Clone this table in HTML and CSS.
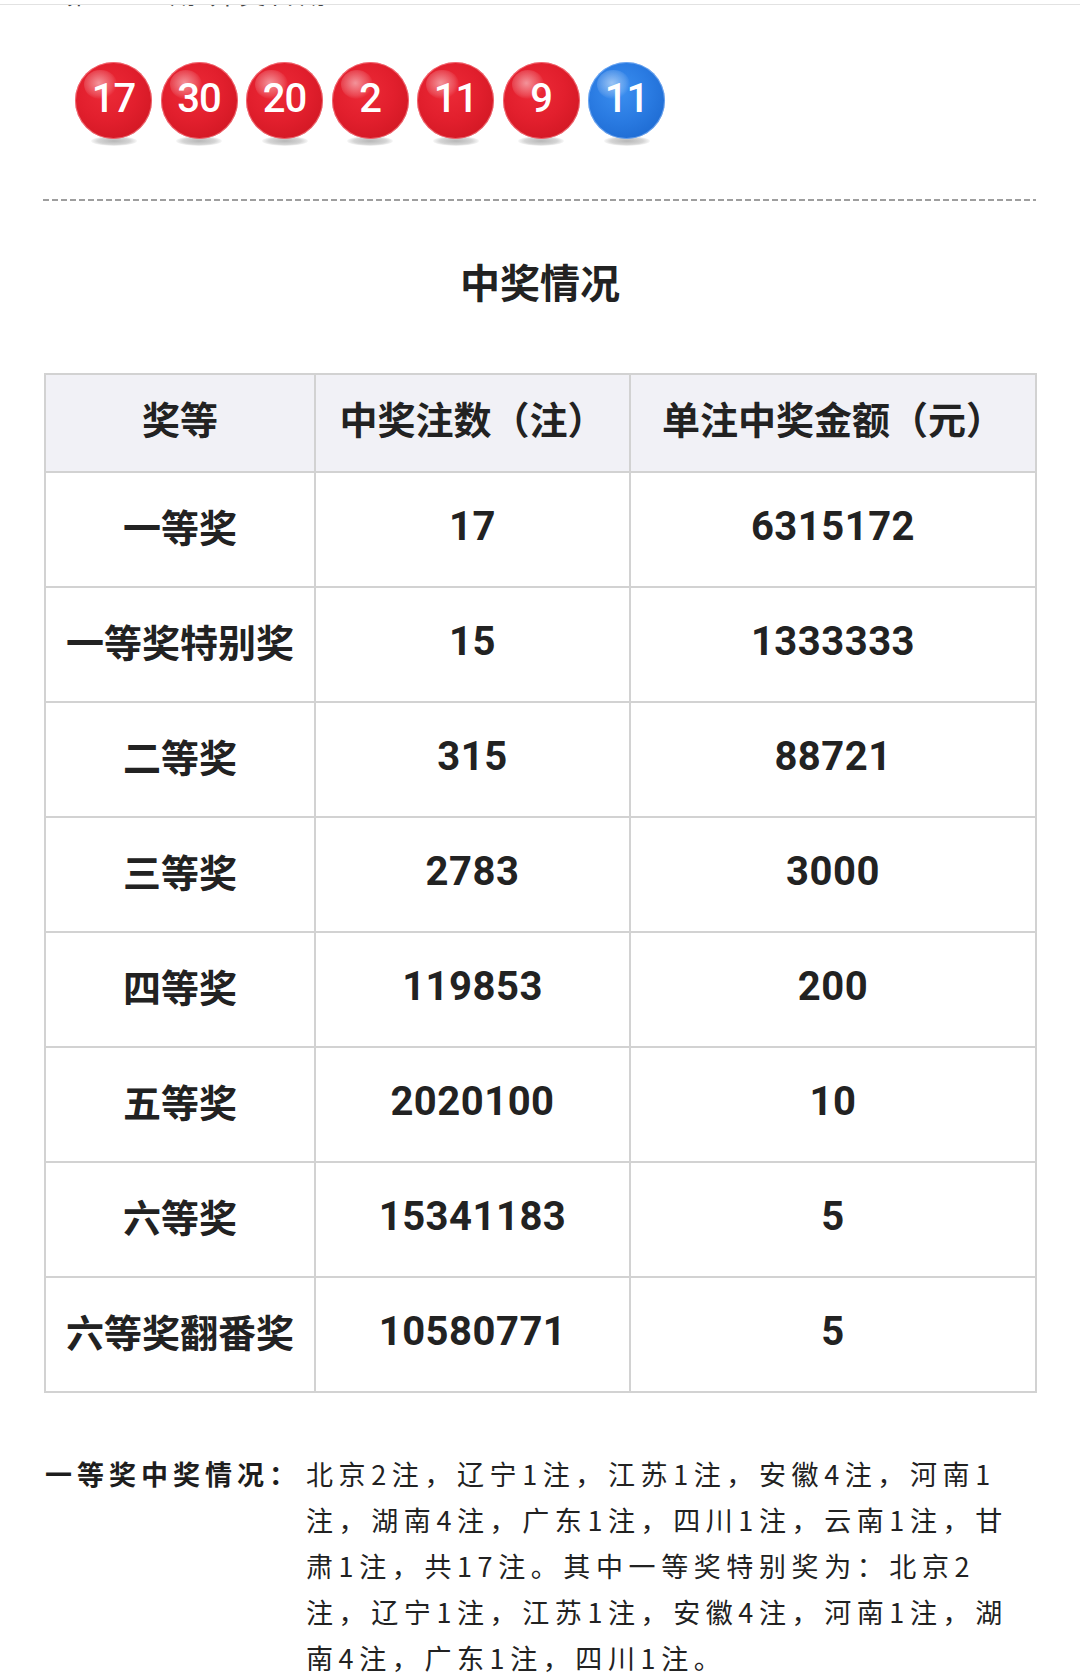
FILE: index.html
```html
<!DOCTYPE html>
<html lang="zh-CN">
<head>
<meta charset="utf-8">
<title>中奖情况</title>
<link rel="stylesheet" href="styles.css">
</head>
<body>
<div class="topbar"></div>
<div class="cut"><div class="cut-text">第2021期 开奖日期</div></div>

<div class="balls">
  <span class="ball red">17</span>
  <span class="ball red">30</span>
  <span class="ball red">20</span>
  <span class="ball red">2</span>
  <span class="ball red">11</span>
  <span class="ball red">9</span>
  <span class="ball blue">11</span>
</div>

<div class="dashed"></div>

<h2 class="title">中奖情况</h2>

<div class="prize-table">
  <div class="cell head">奖等</div>
  <div class="cell head">中奖注数（注）</div>
  <div class="cell head">单注中奖金额（元）</div>

  <div class="cell label">一等奖</div>
  <div class="cell num">17</div>
  <div class="cell num">6315172</div>

  <div class="cell label">一等奖特别奖</div>
  <div class="cell num">15</div>
  <div class="cell num">1333333</div>

  <div class="cell label">二等奖</div>
  <div class="cell num">315</div>
  <div class="cell num">88721</div>

  <div class="cell label">三等奖</div>
  <div class="cell num">2783</div>
  <div class="cell num">3000</div>

  <div class="cell label">四等奖</div>
  <div class="cell num">119853</div>
  <div class="cell num">200</div>

  <div class="cell label">五等奖</div>
  <div class="cell num">2020100</div>
  <div class="cell num">10</div>

  <div class="cell label">六等奖</div>
  <div class="cell num">15341183</div>
  <div class="cell num">5</div>

  <div class="cell label">六等奖翻番奖</div>
  <div class="cell num">10580771</div>
  <div class="cell num">5</div>
</div>

<div class="detail">
  <div class="detail-label">一等奖中奖情况：</div>
  <div class="detail-body">北京2注，辽宁1注，江苏1注，安徽4注，河南1<br>注，湖南4注，广东1注，四川1注，云南1注，甘<br>肃1注，共17注。其中一等奖特别奖为：北京2<br>注，辽宁1注，江苏1注，安徽4注，河南1注，湖<br>南4注，广东1注，四川1注。</div>
</div>
</body>
</html>
```

FILE: styles.css
```css
html {
  margin: 0;
  padding: 0;
  background: #ffffff;
}

body {
  margin: 0;
  padding: 0;
  width: 1080px;
  font-family: "Noto Sans CJK SC", "Noto Sans", sans-serif;
  color: #222222;
  overflow: hidden;
}

.topbar {
  height: 4px;
  border-bottom: 1px solid #e2e2e2;
}

.cut {
  height: 3px;
  overflow: hidden;
  padding-left: 66px;
}

.cut-text {
  font-size: 26px;
  line-height: 30px;
  margin-top: -27px;
  color: #444;
  letter-spacing: 4px;
}

.balls {
  display: flex;
  gap: 8.5px;
  padding: 54px 0 0 75px;
  height: 77px;
}

.ball {
  position: relative;
  width: 77px;
  height: 77px;
  border-radius: 50%;
  display: flex;
  align-items: center;
  justify-content: center;
  font-family: Roboto, "Liberation Sans", sans-serif;
  font-size: 40px;
  font-weight: 500;
  color: #ffffff;
  padding-bottom: 5px;
  box-sizing: border-box;
  letter-spacing: -1px;
}

.ball.red {
  background: radial-gradient(circle at 42% 38%, #ec2a37 0%, #e21f2d 45%, #c9141f 100%);
  box-shadow: inset 0 0 0 1px rgba(255, 160, 165, 0.55);
}

.ball.blue {
  background: radial-gradient(circle at 42% 38%, #3b8ff0 0%, #2a7be2 45%, #1762c9 100%);
  box-shadow: inset 0 0 0 1px rgba(160, 200, 255, 0.55);
}

.ball::before {
  content: "";
  position: absolute;
  left: 12%;
  top: 10%;
  width: 42%;
  height: 38%;
  border-radius: 50%;
  background: radial-gradient(ellipse at 45% 45%, rgba(255, 255, 255, 0.5) 0%, rgba(255, 255, 255, 0.15) 55%, rgba(255, 255, 255, 0) 72%);
}

.ball::after {
  content: "";
  position: absolute;
  left: 50%;
  bottom: -7px;
  width: 46px;
  height: 10px;
  margin-left: -23px;
  border-radius: 50%;
  background: radial-gradient(ellipse at center, rgba(175, 175, 175, 0.9) 0%, rgba(195, 195, 195, 0.7) 50%, rgba(220, 220, 220, 0) 75%);
  z-index: -1;
}

.dashed {
  height: 2px;
  margin: 60px 44px 0 43px;
  background: repeating-linear-gradient(to right, #9e9e9e 0, #9e9e9e 6px, transparent 6px, transparent 9px);
}

.title {
  margin: 60px 0 0;
  font-size: 40px;
  line-height: 40px;
  font-weight: 700;
  text-align: center;
  color: #222;
}

.prize-table {
  display: grid;
  grid-template-columns: 270px 315px 406px;
  grid-template-rows: 98px repeat(8, 115px);
  width: 993px;
  margin: 72px 0 0 44px;
  border-top: 2px solid #d2d2d2;
  border-left: 2px solid #d2d2d2;
  box-sizing: border-box;
}

.cell {
  display: flex;
  align-items: center;
  justify-content: center;
  border-right: 2px solid #d2d2d2;
  border-bottom: 2px solid #d2d2d2;
  box-sizing: border-box;
  font-weight: 700;
  color: #222;
  padding-bottom: 6px;
}

.head {
  background: #f1f1f6;
  font-size: 38px;
  padding-bottom: 12px;
}

.label {
  font-size: 38px;
  padding-bottom: 9px;
}

.num {
  font-family: Roboto, "Liberation Sans", sans-serif;
  font-size: 40px;
  letter-spacing: 0.5px;
}

.detail {
  display: flex;
  margin: 58px 0 0 45px;
  font-size: 27px;
  line-height: 46px;
  letter-spacing: 5.6px;
}

.detail-label {
  width: 261px;
  flex: none;
  font-weight: 700;
  color: #1e1e1e;
  letter-spacing: 5px;
}

.detail-body {
  white-space: nowrap;
  color: #222;
}
```
